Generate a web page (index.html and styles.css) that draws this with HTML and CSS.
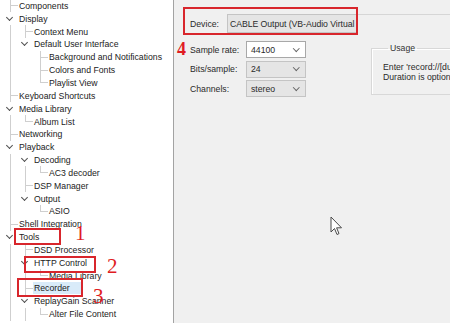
FILE: index.html
```html
<!DOCTYPE html>
<html lang="en">

<head>
    <meta charset="UTF-8">
    <meta name="viewport" content="width=device-width, initial-scale=1.0">
    <title>Preferences - Recorder</title>
    <link rel="stylesheet" href="styles.css">
</head>

<body>

    <div class="window">
        <aside class="sidebar">
            <ul class="tree">
                <li class="row"><span class="g tee"></span><span class="label">Components</span></li>
                <li class="row"><span class="g chev"></span><span class="label">Display</span></li>
                <li class="row"><span class="g pipe"></span><span class="g tee"></span><span class="label">Context Menu</span></li>
                <li class="row"><span class="g pipe"></span><span class="g chev"></span><span class="label">Default User Interface</span></li>
                <li class="row"><span class="g pipe"></span><span class="g"></span><span class="g tee"></span><span class="label">Background and Notifications</span></li>
                <li class="row"><span class="g pipe"></span><span class="g"></span><span class="g tee"></span><span class="label">Colors and Fonts</span></li>
                <li class="row"><span class="g pipe"></span><span class="g"></span><span class="g elbow"></span><span class="label">Playlist View</span></li>
                <li class="row"><span class="g tee"></span><span class="label">Keyboard Shortcuts</span></li>
                <li class="row"><span class="g chev"></span><span class="label">Media Library</span></li>
                <li class="row"><span class="g pipe"></span><span class="g elbow"></span><span class="label">Album List</span></li>
                <li class="row"><span class="g tee"></span><span class="label">Networking</span></li>
                <li class="row"><span class="g chev"></span><span class="label">Playback</span></li>
                <li class="row"><span class="g pipe"></span><span class="g chev"></span><span class="label">Decoding</span></li>
                <li class="row"><span class="g pipe"></span><span class="g pipe"></span><span class="g elbow"></span><span class="label">AC3 decoder</span></li>
                <li class="row"><span class="g pipe"></span><span class="g tee"></span><span class="label">DSP Manager</span></li>
                <li class="row"><span class="g pipe"></span><span class="g chev"></span><span class="label">Output</span></li>
                <li class="row"><span class="g pipe"></span><span class="g"></span><span class="g elbow"></span><span class="label">ASIO</span></li>
                <li class="row"><span class="g tee"></span><span class="label">Shell Integration</span></li>
                <li class="row"><span class="g chev"></span><span class="label">Tools</span></li>
                <li class="row"><span class="g pipe"></span><span class="g tee"></span><span class="label">DSD Processor</span></li>
                <li class="row"><span class="g pipe"></span><span class="g chev"></span><span class="label">HTTP Control</span></li>
                <li class="row"><span class="g pipe"></span><span class="g pipe"></span><span class="g elbow"></span><span class="label">Media Library</span></li>
                <li class="row"><span class="g pipe"></span><span class="g tee"></span><span class="label selected">Recorder</span></li>
                <li class="row"><span class="g pipe"></span><span class="g chev"></span><span class="label">ReplayGain Scanner</span></li>
                <li class="row"><span class="g pipe"></span><span class="g pipe"></span><span class="g elbow"></span><span class="label">Alter File Content</span></li>
            </ul>
        </aside>

        <main class="panel">
            <div class="device-row">
                <span class="field-label">Device:</span>
                <div class="select device-select">CABLE Output (VB-Audio Virtual</div>
                <div class="rule"></div>
            </div>

            <div class="settings">
                <div class="fields">
                    <span class="field-label">Sample rate:</span>
                    <div class="select white">44100</div>
                    <span class="field-label">Bits/sample:</span>
                    <div class="select">24</div>
                    <span class="field-label">Channels:</span>
                    <div class="select">stereo</div>
                </div>

                <fieldset class="usage">
                    <legend>Usage</legend>
                    <p>Enter 'record://[duration]' as an URL to record.</p>
                    <p>Duration is optional, in seconds.</p>
                </fieldset>
            </div>
        </main>
    </div>

    <!-- annotations drawn over the screenshot -->
    <div class="mark box-tools"></div>
    <div class="mark box-http"></div>
    <div class="mark box-recorder"></div>
    <div class="mark box-device"></div>
    <span class="num num-1">1</span>
    <span class="num num-2">2</span>
    <span class="num num-3">3</span>
    <span class="num num-4">4</span>

    <svg class="cursor" width="13" height="21" viewBox="0 0 13 21">
        <path d="M1 1 L1 16 L4.5 12.5 L7 18.5 L9 17.6 L6.6 11.8 L11.5 11.8 Z" fill="#fff" stroke="#4a4a4a" stroke-width="1" stroke-linejoin="round" />
    </svg>

</body>

</html>
```

FILE: styles.css
```css
* {
    margin: 0;
    padding: 0;
    box-sizing: border-box;
}

body {
    width: 450px;
    height: 323px;
    overflow: hidden;
    position: relative;
    font-family: "Liberation Sans", Arial, sans-serif;
    font-size: 8.7px;
    color: #222;
    background: #f0f0f0;
}

.window {
    display: flex;
    height: 100%;
}

/* TREE */
.sidebar {
    width: 174px;
    flex: none;
    background: #fff;
    border-right: 1px solid #a3a3a3;
    overflow: hidden;
}

.tree {
    list-style: none;
    padding-left: 3px;
    margin-top: -0.5px;
}

.row {
    display: flex;
    align-items: center;
    height: 12.85px;
    white-space: nowrap;
}

.g {
    width: 15px;
    height: 100%;
    flex: none;
    display: flex;
    align-items: center;
    justify-content: center;
}

.pipe {
    background: linear-gradient(#cfcfcf, #cfcfcf) no-repeat 7px 0 / 1px 100%;
}

.tee {
    background:
        linear-gradient(#cfcfcf, #cfcfcf) no-repeat 7px 0 / 1px 100%,
        linear-gradient(#cfcfcf, #cfcfcf) no-repeat 7px 50% / 8px 1px;
}

.elbow {
    background:
        linear-gradient(#cfcfcf, #cfcfcf) no-repeat 7px 0 / 1px 50%,
        linear-gradient(#cfcfcf, #cfcfcf) no-repeat 7px 50% / 8px 1px;
}

.chev::before {
    content: "";
    width: 4px;
    height: 4px;
    border-right: 1.3px solid #505050;
    border-bottom: 1.3px solid #505050;
    transform: rotate(45deg);
    margin: -3px 2px 0 0;
}

.label {
    padding: 0 1px;
    line-height: 12px;
}

.label.selected {
    background: #d9ebf9;
    padding: 0 12px 0 1px;
}

/* PANEL */
.panel {
    flex: 1;
    padding: 14px 0 0 16px;
    overflow: hidden;
    color: #2a2a2a;
}

.device-row {
    display: flex;
    align-items: center;
    height: 19px;
}

.device-row .field-label {
    width: 37px;
}

.rule {
    flex: 1;
    align-self: flex-start;
    border-top: 1px solid #d6d6d6;
}

.select {
    display: flex;
    align-items: center;
    height: 17px;
    padding: 0 7px 0 4px;
    background: #e5e5e5;
    border: 1px solid #c4c4c4;
    white-space: nowrap;
    overflow: hidden;
}

.select.white {
    background: #fff;
    border-color: #a8a8a8;
}

.fields .select::after {
    content: "";
    margin: -3px 0 0 auto;
    width: 3.5px;
    height: 3.5px;
    border-right: 1px solid #666;
    border-bottom: 1px solid #666;
    transform: rotate(45deg);
}

.device-select {
    width: 130px;
    height: 19px;
    padding: 0 1px 0 2px;
    letter-spacing: -0.05px;
}

.settings {
    display: flex;
    margin-top: 8px;
}

.fields {
    display: grid;
    grid-template-columns: 56px 60px;
    grid-auto-rows: 17px;
    row-gap: 2.5px;
    align-items: center;
}

.usage {
    flex: 1;
    margin: 2px -30px 0 65px;
    height: 52px;
    padding: 9px 12px 0 11px;
    border: 1px solid #d8d8d8;
    box-shadow: inset 1px 1px 0 #fff;
    white-space: nowrap;
    line-height: 10px;
}

.usage legend {
    margin-left: 5px;
    padding: 0 2px;
    color: #333;
}

/* ANNOTATIONS */
.mark {
    position: absolute;
    border: 2px solid #d8262c;
}

.box-tools {
    left: 14px;
    top: 228px;
    width: 47px;
    height: 17px;
}

.box-http {
    left: 24px;
    top: 256px;
    width: 72px;
    height: 17px;
}

.box-recorder {
    left: 17px;
    top: 278px;
    width: 66px;
    height: 19px;
}

.box-device {
    left: 183px;
    top: 7px;
    width: 175px;
    height: 28px;
}

.num {
    position: absolute;
    font-family: "Liberation Serif", "Times New Roman", serif;
    font-size: 21px;
    line-height: 1;
    color: #e01b22;
}

.num-1 {
    left: 75px;
    top: 223px;
}

.num-2 {
    left: 107px;
    top: 256px;
}

.num-3 {
    left: 93px;
    top: 286px;
}

.num-4 {
    left: 177px;
    top: 40px;
    font-size: 18px;
    font-weight: bold;
}

.cursor {
    position: absolute;
    left: 330px;
    top: 216px;
}
```
